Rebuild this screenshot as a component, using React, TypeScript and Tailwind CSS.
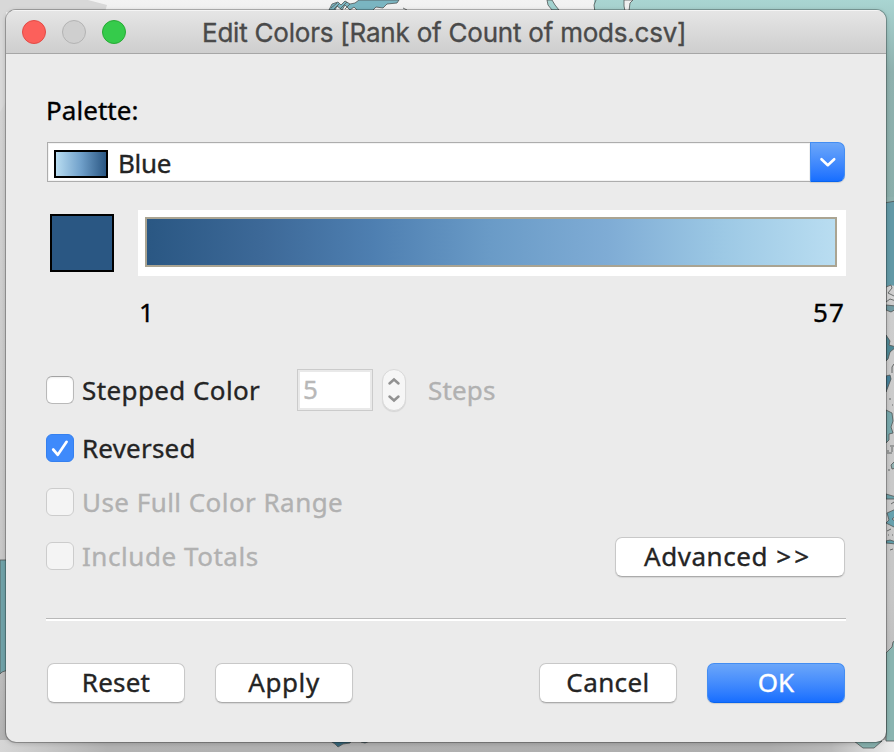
import type { ReactNode } from "react";

const ui = "font-['Noto_Sans','Open_Sans',sans-serif] [-webkit-text-stroke:0.35px]";

function MapBackdrop() {
  return (
    <svg className="absolute inset-0" width="894" height="752" viewBox="0 0 894 752">
      <defs>
        <linearGradient id="land" x1="0" y1="0" x2="0" y2="1">
          <stop offset="0" stopColor="#f3f3f3" />
          <stop offset="0.15" stopColor="#d2d2d2" />
          <stop offset="0.8" stopColor="#c6c6c6" />
          <stop offset="1" stopColor="#b2b2b2" />
        </linearGradient>
        <linearGradient id="pale" x1="0" y1="0" x2="0" y2="1">
          <stop offset="0" stopColor="#a9d5d2" />
          <stop offset="0.35" stopColor="#8fb1ae" />
          <stop offset="1" stopColor="#8aaeaa" />
        </linearGradient>
        <linearGradient id="floor" x1="0" y1="0" x2="1" y2="0">
          <stop offset="0" stopColor="#d6d6d6" />
          <stop offset="0.12" stopColor="#b2b2b2" />
          <stop offset="0.86" stopColor="#adadad" />
          <stop offset="0.93" stopColor="#b9b9b9" />
          <stop offset="1" stopColor="#ececec" />
        </linearGradient>
      </defs>
      <rect width="894" height="752" fill="url(#land)" />
      <path d="M0 0H88L107 5L105 12H6V102L0 112Z" fill="#d8d8d8" />
      <rect y="740" width="894" height="12" fill="url(#floor)" />
      <path d="M594 0H894V202L880 205V12H594Z" fill="url(#pale)" />
      <g stroke="#505656" strokeWidth="0.8">
        <path d="M329 10L332 4L338 2L341 5L345 1L350 4L355 3L359 0H399L397 3L387 4L383 8L376 7L372 11H358L354 7L350 10L345 5L342 10L337 6L335 10Z" fill="#7ab5c1" />
        <path d="M403 8L407 10M331 8L337 3M340 9L347 2M334 9L339 4M345 9L350 4" fill="none" />
        <path d="M547 0L548 5L552 10H559L555 5L552 0Z" fill="#a3d2cf" />
        <path d="M596 0L594 5L595 12" fill="none" />
        <path d="M624 0V6L625 11H629L630 3L633 0Z" fill="#efefef" />
        <path d="M0 560H8V670L2 672L0 674Z" fill="#70a3a9" />
        <path d="M884 197H896V286L890 285L884 288Z" fill="#6299a6" stroke="none" />
        <path d="M884 197H894V201L886 203L884 203Z" fill="#8eb1ad" stroke="none" />
        <path d="M884 203L896 201" />
        <path d="M886 287L891 285L892 288L888 293L896 297V301L890 299L886 302Z" fill="#d4d4d4" />
        <path d="M886 305L896 306V309L891 312L886 310Z" fill="#7199a1" />
        <path d="M886 335L890 341L889 345L896 347L890 352L888 359L886 361Z" fill="#4e8794" />
        <path d="M886 376L890 375L891 379L886 392Z" fill="#46819a" />
        <path d="M886 410L892 413L893 421L891 427L893 433L889 434V440L886 443Z" fill="#78a8ac" />
        <path d="M896 460L891 465L892 469L896 468Z" fill="#8fb0b0" />
        <path d="M886 494L896 497V499H886Z" fill="#6ba0a8" />
        <path d="M896 509L887 513L889 520L886 523L896 528V522L892 519L896 516Z" fill="#67a0ad" />
        <path d="M886 541L890 540L896 542V544L886 543Z" fill="#5e9aa5" />
        <path d="M886 653L892 647L893 642L896 640V741H886Z" fill="#8ab4b0" />
        <path d="M854 741H882L874 748H863Z" fill="#86b0ad" />
        <path d="M329 740L335 744L338 747L343 744L350 743L352 740ZM361 742L365 743L370 741" fill="#38677b" />
      </g>
      <path d="M889 399h2M892 405h1M888 450v4M892 447v5M889 453h3M888 470h2M891 504l3-2M887 531l4-2M888 535h1M892 535h1M890 550l3-1M892 373v-6l2-3M890 446h4" stroke="#656868" fill="none" />
    </svg>
  );
}

function PushButton({ children, className }: { children: ReactNode; className: string }) {
  return (
    <button
      className={`flex h-10 items-center justify-center rounded-[7px] whitespace-pre border border-[#c8c8c8] border-b-[#ababab] bg-white pb-0.5 text-[26px] leading-none text-[#242424] shadow-[0_1px_1px_#00000018] ${className}`}
    >
      {children}
    </button>
  );
}

function CheckRow({ label, checked, disabled, spacing }: { label: string; checked?: boolean; disabled?: boolean; spacing: string }) {
  const box = checked
    ? "border-[#3580ef] bg-[#3e8afb]"
    : disabled
      ? "border-[#cccccc] bg-[#f4f4f4]"
      : "border-[#b9b9b9] border-t-[#a3a3a3] bg-white shadow-[inset_0_1px_2px_#00000012]";
  return (
    <label className={`flex h-7 items-center gap-2 whitespace-pre text-[26px] leading-7 ${disabled ? "text-[#b1b1b1]" : "text-[#242424]"}`}>
      <span className={`flex size-7 shrink-0 items-center justify-center rounded-[6px] border ${box}`}>
        {checked && (
          <svg width="26" height="26" viewBox="0 0 26 26" fill="none" stroke="white" strokeWidth="2.7" strokeLinecap="round" strokeLinejoin="round">
            <path d="M6.2 14.5L10.8 19.8L19.6 6.8" />
          </svg>
        )}
      </span>
      <span className={spacing}>{label}</span>
    </label>
  );
}

export default function App() {
  return (
    <div className={`relative h-[752px] w-[894px] overflow-hidden ${ui}`}>
      <MapBackdrop />
      <div className="relative px-1.5 pt-2.5 pr-2">
        <main className="flex h-[732px] flex-col overflow-hidden rounded-[10px] bg-[#ebebeb] shadow-[0_0_0_1px_#00000040,0_1px_5px_#00000038]">
          <header className="flex h-11 shrink-0 items-center border-b border-[#a6a6a6] bg-linear-to-b from-[#e6e6e6] to-[#cecece] pl-4 shadow-[inset_0_1px_0_#f5f5f5]">
            <div className="flex gap-4">
              <i className="size-6 rounded-full border border-[#e24b46] bg-[#fc605b]" />
              <i className="size-6 rounded-full border border-[#b3b3b3] bg-[#cfcfcf]" />
              <i className="size-6 rounded-full border border-[#27aa35] bg-[#35cb4b]" />
            </div>
            <h1 className="ml-[76px] whitespace-nowrap pt-0.5 font-['Inter',sans-serif] text-[26px] leading-none text-[#4a4a4a]">
              <span className="tracking-[-0.22px]">Edit Colors [Rank of Count of mods.csv]</span>
            </h1>
          </header>

          <section className="flex flex-1 flex-col px-10 text-[26px]">
            <div className="mt-[42px] h-7 leading-7 text-black"><span className="tracking-[0.05px]">Palette:</span></div>

            <div className="mt-[18px] mr-px ml-px flex h-10 shrink-0">
              <div className="flex flex-1 items-center gap-2.5 border border-r-0 border-[#adadad] bg-white pl-1.5 text-[#242424] shadow-[inset_0_0_0_1px_#f3f3f3]">
                <i className="mt-1 h-7 w-[54px] border-2 border-black bg-linear-to-r from-[#b9ddf1] via-[#70a0ca] to-[#2a5783]" />
                <span className="mt-0.5 leading-7 tracking-[-0.3px]">Blue</span>
              </div>
              <button className="flex w-[35px] items-center justify-center rounded-r-[7px] border border-[#438df2] border-b-[#0864ee] bg-linear-to-b from-[#6ba6f9] to-[#166eff] shadow-[0_1px_1px_#00000020]">
                <svg width="18" height="12" viewBox="0 0 18 12" fill="none" stroke="white" strokeWidth="2.6" strokeLinecap="round" strokeLinejoin="round">
                  <path d="M2.5 3.2L8.8 9.2L15.2 3.2" />
                </svg>
              </button>
            </div>

            <div className="mt-7 flex h-[66px] shrink-0 items-center gap-6 pl-1">
              <i className="h-[58px] w-16 shrink-0 border-2 border-black bg-[#2a5783]" />
              <div className="h-full flex-1 bg-white py-[7px] pr-[9px] pl-[7px]">
                <div className="h-[50px] border-2 border-[#aaa492] bg-[linear-gradient(to_right,#2a5783,#3d6998_17%,#4e7fb1_33%,#6a9bc7_50%,#7facd5_67%,#9dc9e5_84%,#b9ddf1)]" />
              </div>
            </div>

            <div className="mt-[22px] flex h-7 shrink-0 justify-between pr-px pl-[93px] leading-7 text-black">
              <span>1</span>
              <span className="tracking-[1.1px]">57</span>
            </div>

            <div className="mt-[43px] flex h-[42px] shrink-0 items-center">
              <div className="w-[251px]"><CheckRow label="Stepped Color" spacing="tracking-[0.4px]" /></div>
              <div className="flex h-[42px] w-[76px] items-center border border-[#cbcbcb] bg-white pl-[5px] leading-none text-[#b8b8b8] shadow-[inset_0_0_0_2px_#e9e9e9]"><span className="mb-0.5">5</span></div>
              <div className="ml-[9px] flex h-[42px] w-6 flex-col items-center justify-between rounded-full border border-[#d9d9d9] bg-[#f6f6f6] py-[7px] shadow-[0_1px_1px_#00000018]">
                <svg width="14" height="9" viewBox="0 0 14 9" fill="none" stroke="#919191" strokeWidth="2.5" strokeLinecap="round"><path d="M2.5 6.5L7 2.5L11.5 6.5" /></svg>
                <svg width="14" height="9" viewBox="0 0 14 9" fill="none" stroke="#919191" strokeWidth="2.5" strokeLinecap="round"><path d="M2.5 2.5L7 6.5L11.5 2.5" /></svg>
              </div>
              <span className="ml-[22px] leading-7 tracking-[0.15px] text-[#b1b1b1]">Steps</span>
            </div>

            <div className="mt-[23px]"><CheckRow label="Reversed" checked spacing="tracking-[0.2px]" /></div>
            <div className="mt-[26px]"><CheckRow label="Use Full Color Range" disabled spacing="tracking-[0.45px]" /></div>
            <div className="mt-[21px] flex h-10 shrink-0 items-center justify-between pr-px">
              <div className="pb-0.5"><CheckRow label="Include Totals" disabled spacing="tracking-[0.55px]" /></div>
              <PushButton className="w-[230px] pr-1 tracking-[0.55px]">Advanced <span className="ml-px tracking-[3px]">&gt;&gt;</span></PushButton>
            </div>

            <div className="mt-[41px] h-[3px] shrink-0 border-t border-[#b8b8b8] bg-white" />

            <div className="mt-[42px] flex justify-between px-px">
              <div className="flex gap-[30px]">
                <PushButton className="w-[138px] tracking-[0.2px]">Reset</PushButton>
                <PushButton className="w-[138px] tracking-[0.6px]">Apply</PushButton>
              </div>
              <div className="flex gap-[30px]">
                <PushButton className="w-[138px] tracking-[0.4px]">Cancel</PushButton>
                <button className="flex h-10 w-[138px] items-center justify-center rounded-[7px] border border-[#438df2] border-b-[#0864ee] bg-linear-to-b from-[#6ba6f9] to-[#166eff] pb-0.5 leading-none text-white shadow-[0_1px_1px_#00000020]">OK</button>
              </div>
            </div>
          </section>
        </main>
      </div>
    </div>
  );
}
